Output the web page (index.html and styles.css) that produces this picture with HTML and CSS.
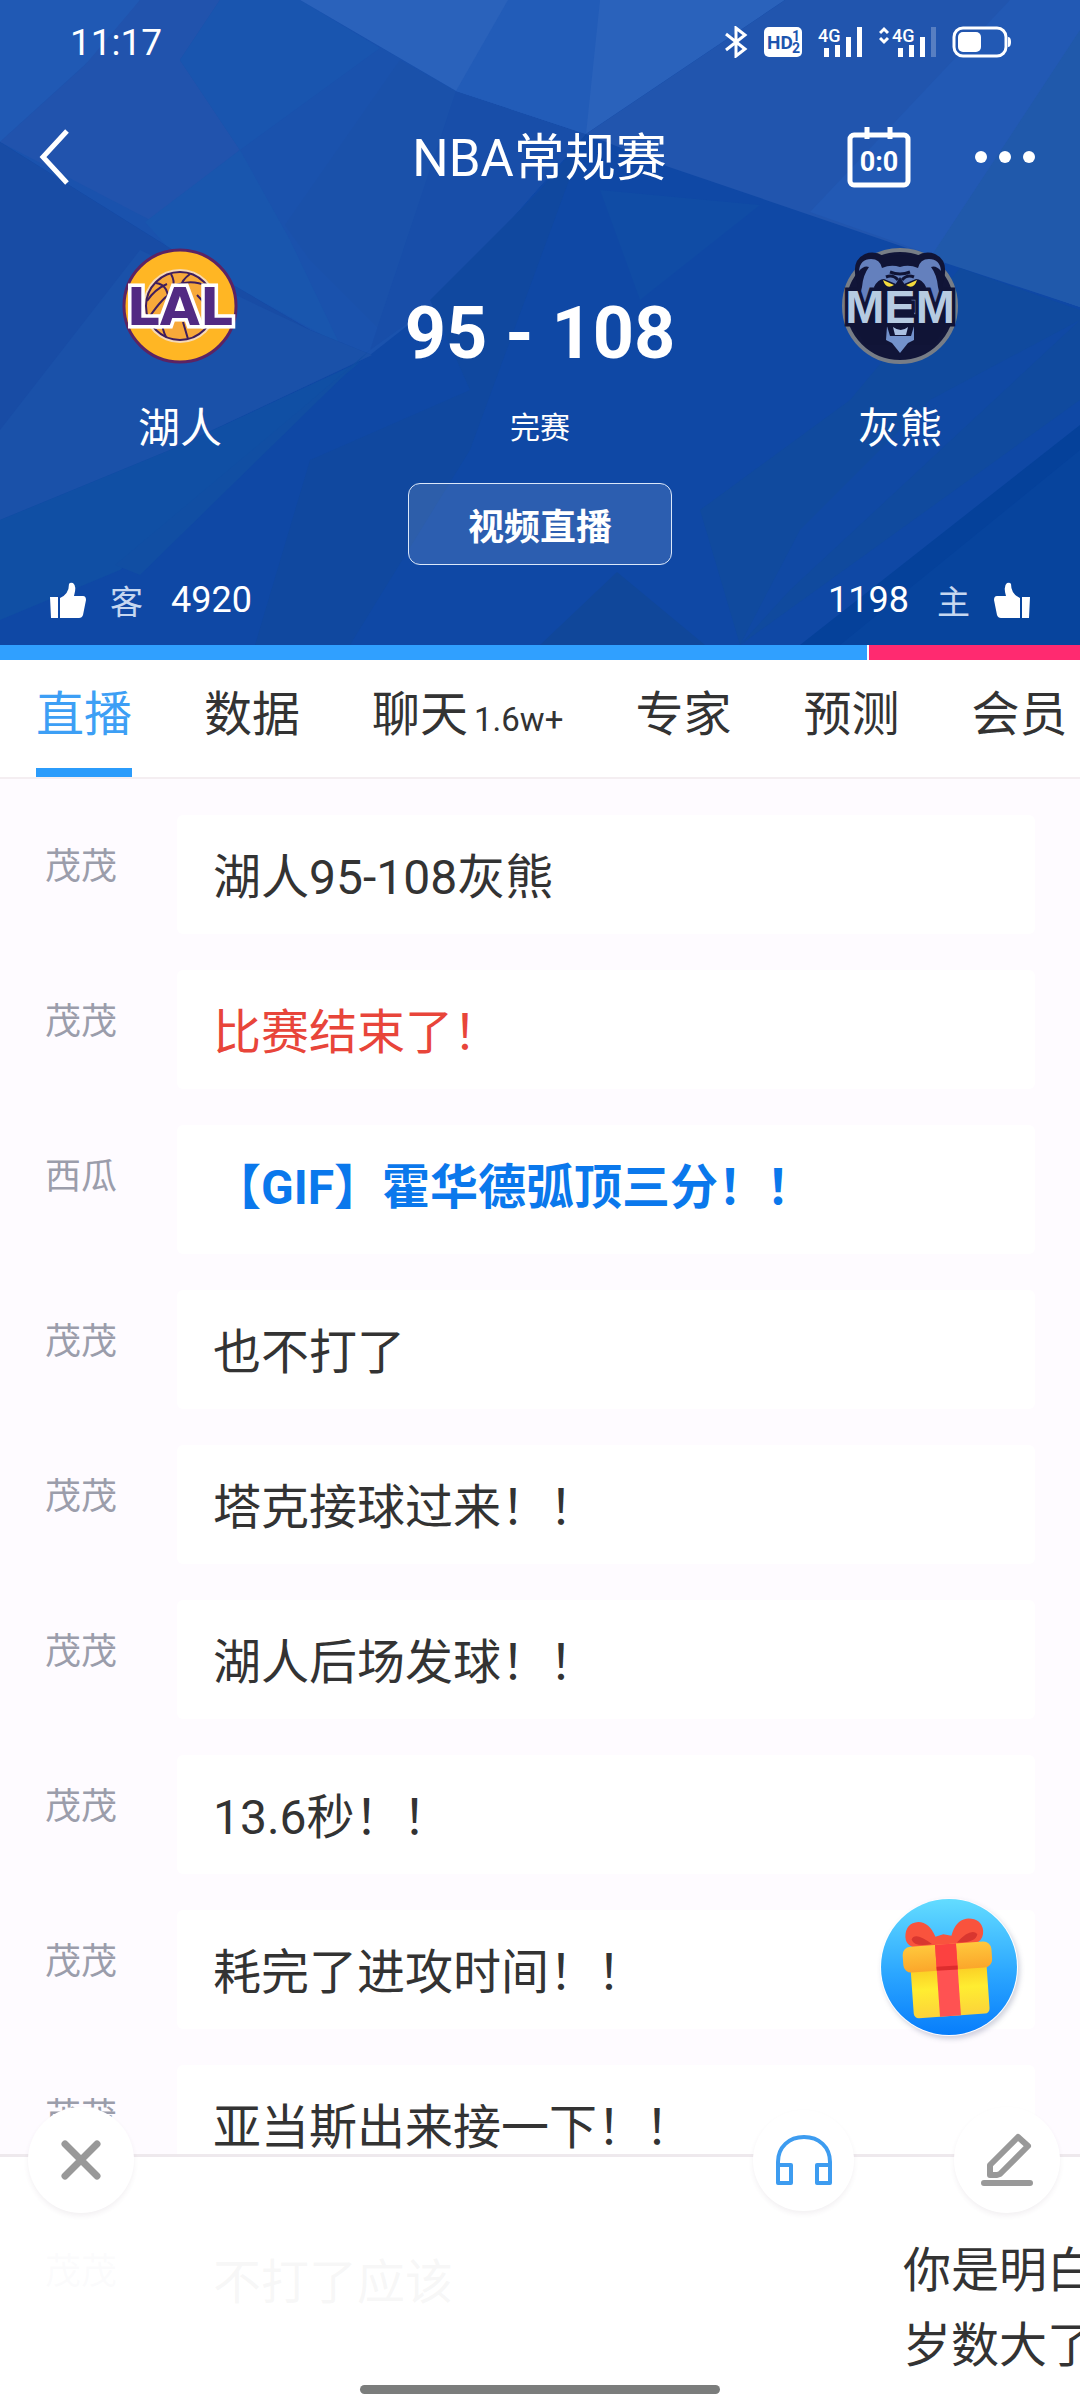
FILE: index.html
```html
<!DOCTYPE html>
<html lang="zh-CN">

<head>
    <meta charset="UTF-8">
    <meta name="viewport" content="width=device-width, initial-scale=1.0">
    <title>NBA常规赛</title>
    <link rel="stylesheet" href="styles.css">
</head>

<body>
    <header class="match">
        <!-- 背景色块 -->
        <svg class="match-bg" viewBox="0 0 1080 645" preserveAspectRatio="none" aria-hidden="true">
            <rect width="1080" height="645" fill="#0f48a5" />
            <polygon points="0,0 300,0 456,91 586,134 440,300 370,355 310,330 165,245 0,142" fill="#1a52ad" />
            <polygon points="0,0 140,0 110,42 0,142" fill="#2059b4" />
            <polygon points="140,0 220,0 180,60 240,150 150,220 0,142 85,65" fill="#2153ad" />
            <polygon points="220,0 300,0 380,48 240,150 180,60" fill="#1955af" />
            <polygon points="240,150 290,240 340,345 170,250 145,222" fill="#1956ae" />
            <polygon points="400,60 456,91 380,330 310,260 285,225" fill="#1a51aa" />
            <polygon points="0,142 165,245 310,330 372,355 170,450 0,520" fill="#184ca5" />
            <polygon points="140,250 310,330 372,355 170,450 0,520 0,430" fill="#1a51a9" />
            <polygon points="0,520 170,450 360,362 120,570 0,620" fill="#104fa4" />
            <polygon points="300,410 370,350 140,575 115,565" fill="#114ea3" />
            <polygon points="456,91 586,134 440,300 370,350" fill="#184ea9" />
            <polygon points="586,134 540,190 430,300 470,390 310,460 255,645 350,645 470,450" fill="#10489f" />
            <polygon points="600,190 760,205 640,300" fill="#104ca5" />
            <polygon points="300,0 456,91 586,134 785,0" fill="#2a62bb" />
            <polygon points="508,0 600,0 586,134 456,91" fill="#225cb8" />
            <polygon points="785,0 1080,0 1080,307 669,167 586,134" fill="#2155ae" />
            <polygon points="1010,0 1080,0 1080,307 810,212" fill="#2259b4" />
            <polygon points="1080,30 1080,307 930,258" fill="#2059ab" />
            <polygon points="1080,310 1080,400 740,645 700,510 850,400 960,268" fill="#104a9e" />
            <polygon points="1080,320 790,590 740,645 800,530 930,400" fill="#1049a4" />
            <polygon points="1080,425 800,645 1080,645" fill="#05419a" />
            <polygon points="1080,450 840,645 1080,645" fill="#07449d" />
            <polygon points="617,572 540,645 705,645" fill="#10479a" />
        </svg>

        <div class="status">
            <span class="time">11:17</span>
            <div class="status-icons">
                <svg width="24" height="32" viewBox="0 0 24 32" fill="none" stroke="#fff" stroke-width="3">
                    <path d="M2 8l19 15-9 7V2l9 7L2 24" />
                </svg>
                <svg width="40" height="32" viewBox="0 0 40 32">
                    <rect x="1" y="1" width="38" height="30" rx="5" fill="#fff" />
                    <text x="4" y="23" class="hd">HD</text>
                    <text x="29" y="15" class="hd-num">1</text>
                    <text x="29" y="27" class="hd-num">2</text>
                </svg>
                <svg width="46" height="32" viewBox="0 0 46 32" fill="#fff">
                    <text x="0" y="16" class="net">4G</text>
                    <path d="M6 22h5v9H6zM17 19h5v12h-5zM28 11h5v20h-5zM39 1h5v30h-5z" />
                </svg>
                <svg width="58" height="32" viewBox="0 0 58 32" fill="#fff">
                    <path d="M1 7l4-4 4 4M1 12l4 4 4-4" fill="none" stroke="#fff" stroke-width="3" />
                    <text x="13" y="16" class="net">4G</text>
                    <path d="M19 22h5v9h-5zM30 19h5v12h-5zM41 11h5v20h-5z" />
                    <path d="M52 1h5v30h-5z" opacity=".25" />
                </svg>
                <svg width="60" height="32" viewBox="0 0 60 32">
                    <rect x="2" y="2" width="52" height="28" rx="9" fill="none" stroke="#fff" stroke-width="3" />
                    <rect x="6" y="6" width="23" height="20" rx="5" fill="#fff" />
                    <path d="M56 11q3 0 3 5t-3 5z" fill="#fff" />
                </svg>
            </div>
        </div>

        <div class="nav">
            <button class="icon-btn back" aria-label="返回">
                <svg width="30" height="56" viewBox="0 0 30 56" fill="none" stroke="#fff" stroke-width="5">
                    <path d="M28 2L4 28l24 26" />
                </svg>
            </button>
            <h1>NBA常规赛</h1>
            <div class="nav-right">
                <button class="icon-btn" aria-label="比分">
                    <svg width="66" height="64" viewBox="0 0 66 64" fill="none" stroke="#fff" stroke-width="5">
                        <rect x="4" y="10" width="58" height="50" rx="4" />
                        <path d="M21 2v12M44 2v12" />
                        <text x="33" y="46" class="cal">0:0</text>
                    </svg>
                </button>
                <button class="icon-btn" aria-label="更多">
                    <svg width="62" height="14" viewBox="0 0 62 14" fill="#fff">
                        <circle cx="7" cy="7" r="6" />
                        <circle cx="31" cy="7" r="6" />
                        <circle cx="55" cy="7" r="6" />
                    </svg>
                </button>
            </div>
        </div>

        <div class="board">
            <div class="team">
                <svg width="120" height="120" viewBox="0 0 120 120">
                    <circle cx="60" cy="61" r="56" fill="#ffb624" stroke="#5c2363" stroke-width="3" />
                    <circle cx="60" cy="61" r="37" fill="#f6d9b4" />
                    <circle cx="60" cy="61" r="34" fill="#f7a93a" stroke="#3f1d5c" stroke-width="2" />
                    <path d="M51 29q4 7 2 14M70 29q-8 6-9 12M56 40q16-6 31 1M27 56q8-12 20-17M30 71q14-20 22-23M36 38q14 2 12 22M46 62q-8 14 0 30M63 77l5 17M77 50l13 14" fill="none" stroke="#3f1d5c" stroke-width="2" />
                    <text x="60" y="80" class="logo lal">LAL</text>
                </svg>
                <h2>湖人</h2>
            </div>
            <div class="score">
                <strong>95 - 108</strong>
                <p>完赛</p>
                <button class="live">视频直播</button>
            </div>
            <div class="team">
                <svg width="120" height="120" viewBox="0 0 120 120">
                    <circle cx="60" cy="61" r="56" fill="#111538" stroke="#777d86" stroke-width="4" />
                    <path d="M17 38Q10 16 25 9q10-4 20 3 15-4 30 0 10-7 20-3 15 7 8 29l-4 24H21z" fill="#101436" />
                    <!-- 熊脸 -->
                    <path d="M19 26q1-12 12-12 9 0 11 9 9-4 18-1 9-3 18 1 2-9 11-9 11 0 12 12-5-6-10-4 6 8 7 20l8 34H14l8-34q1-12 7-20-5-2-10 4z" fill="#6480bd" />
                    <path d="M50 27q10 4 20 0M46 32q7-3 12 3M74 32q-7-3-12 3" fill="none" stroke="#101436" stroke-width="3" />
                    <path d="M60 32l10 16 6 30H44l6-30z" fill="#101436" />
                    <path d="M34 42q4-8 10-8l12 5-2 9H36zM86 42q-4-8-10-8l-12 5 2 9h18z" fill="#101436" />
                    <path d="M43 35l11 5q-8 5-11-5zM77 35l-11 5q8 5 11-5z" fill="#f4dc3c" />
                    <path d="M12 78h96l-14 22H26z" fill="#101436" />
                    <path d="M47 81l3 10h21l3-10 0 14-6 3-8 10-8-10-6-3z" fill="#7392cc" />
                    <path d="M53 82q8 6 15 0l-2 8H55z" fill="#aac0e2" />
                    <text x="60" y="78" class="logo mem">MEM</text>
                </svg>
                <h2>灰熊</h2>
            </div>
        </div>

        <div class="votes">
            <button class="vote">
                <svg width="36" height="36" viewBox="0 0 36 36" fill="#fff">
                    <path d="M0 15h8v21H1zM10 16q9-4 9-14 1-2 4-1 4 3 1 13h9q3 0 3 4l-3 15q-1 3-4 3H10z" />
                </svg>
                <small>客</small>
                <span>4920</span>
            </button>
            <button class="vote">
                <span>1198</span>
                <small>主</small>
                <svg width="36" height="36" viewBox="0 0 36 36" fill="#fff">
                    <path d="M36 15h-8v21h7zM26 16q-9-4-9-14-1-2-4-1-4 3-1 13H3q-3 0-3 4l3 15q1 3 4 3h19z" />
                </svg>
            </button>
        </div>
    </header>

    <div class="ratio">
        <div class="away"></div>
        <div class="home"></div>
    </div>

    <nav class="tabs">
        <a href="#live" class="active">直播</a>
        <a href="#data">数据</a>
        <a href="#chat">聊天<small>1.6w+</small></a>
        <a href="#expert">专家</a>
        <a href="#predict">预测</a>
        <a href="#vip">会员</a>
    </nav>

    <main id="live">
        <ul>
            <li><span class="name">茂茂</span><p class="msg">湖人95-108灰熊</p></li>
            <li><span class="name">茂茂</span><p class="msg red">比赛结束了！</p></li>
            <li><span class="name">西瓜</span><p class="msg gif">【GIF】霍华德弧顶三分！！</p></li>
            <li><span class="name">茂茂</span><p class="msg">也不打了</p></li>
            <li><span class="name">茂茂</span><p class="msg">塔克接球过来！！</p></li>
            <li><span class="name">茂茂</span><p class="msg">湖人后场发球！！</p></li>
            <li><span class="name">茂茂</span><p class="msg">13.6秒！！</p></li>
            <li><span class="name">茂茂</span><p class="msg">耗完了进攻时间！！</p></li>
            <li><span class="name">茂茂</span><p class="msg">亚当斯出来接一下！！</p></li>
            <li><span class="name">茂茂</span><p class="msg">不打了应该</p></li>
        </ul>
    </main>

    <button class="icon-btn gift" aria-label="礼物">
        <svg width="138" height="138" viewBox="0 0 138 138">
            <defs>
                <linearGradient id="sky" x2="0" y2="1">
                    <stop offset="0" stop-color="#63dcff" />
                    <stop offset=".55" stop-color="#2ba6ff" />
                    <stop offset="1" stop-color="#077dfb" />
                </linearGradient>
                <linearGradient id="box" x2="0" y2="1">
                    <stop offset="0" stop-color="#f9c220" />
                    <stop offset=".5" stop-color="#ffed31" />
                    <stop offset="1" stop-color="#fcd33a" />
                </linearGradient>
                <linearGradient id="lid" x2="0" y2="1">
                    <stop offset="0" stop-color="#ffc83c" />
                    <stop offset="1" stop-color="#fba62b" />
                </linearGradient>
            </defs>
            <circle cx="69" cy="69" r="68" fill="url(#sky)" />
            <g transform="rotate(-4 69 75)">
                <path d="M57 47Q28 52 28 36q1-14 14-14 11 1 16 16l8-2 8 2q5-15 16-16 15 0 16 13 0 17-28 13z" fill="#f9533d" />
                <path d="M54 45q-18 2-20-6 4-8 20 6zM79 45q19 2 21-7-6-7-21 7z" fill="#d9362f" />
                <rect x="31" y="62" width="76" height="56" rx="5" fill="url(#box)" />
                <rect x="24" y="46" width="89" height="26" rx="8" fill="url(#lid)" />
                <path d="M57 46h21v72H57z" fill="#ff5252" />
                <path d="M57 46h21v25H57z" fill="#fc4140" />
                <path d="M57 68h21v4H57z" fill="#dd2c2d" />
            </g>
        </svg>
    </button>

    <!-- 底部悬浮区 -->
    <footer class="dock">
        <div class="actions">
            <button class="round" aria-label="关闭">
                <svg width="40" height="40" viewBox="0 0 40 40" fill="none" stroke="#999" stroke-width="7" stroke-linecap="round">
                    <path d="M4 4l32 32M36 4L4 36" />
                </svg>
            </button>
            <button class="round listen" aria-label="收听">
                <svg width="56" height="52" viewBox="0 0 56 52" fill="none" stroke="#3d9cf0" stroke-width="4" stroke-linejoin="round">
                    <path d="M2 32V28C2 13 13 3 28 3s26 10 26 25v4M2 31h13v18H2zM41 31h13v18H41z" />
                </svg>
            </button>
            <button class="round" aria-label="发言">
                <svg width="52" height="54" viewBox="0 0 52 54" fill="none" stroke="#999" stroke-width="6" stroke-linecap="round" stroke-linejoin="round">
                    <path d="M9 32L37 4l10 9-28 28-3 1H9zM3 50h46" />
                </svg>
            </button>
        </div>
        <p class="danmu">你是明白<br>岁数大了</p>
        <div class="home-bar"></div>
    </footer>
</body>

</html>
```
FILE: styles.css
```css
* {
    margin: 0;
    padding: 0;
    list-style: none;
    box-sizing: border-box;
}

body {
    height: 100vh;
    display: flex;
    flex-direction: column;
    position: relative;
    overflow: hidden;
    font-family: Roboto, "Noto Sans CJK SC", sans-serif;
    color: #333;
    background-color: #fefbff;
}

button {
    font-family: inherit;
    color: inherit;
    border: 0;
    background: none;
    cursor: pointer;
}

svg {
    display: block;
}

a {
    color: inherit;
    text-decoration: none;
}

/* 比赛头部 */
.match {
    position: relative;
    color: #fff;
}

.match-bg {
    position: absolute;
    top: 0;
    left: 0;
    z-index: -1;
    width: 100%;
    height: 100%;
}

.status {
    height: 84px;
    padding: 0 68px 0 70px;
    display: flex;
    justify-content: space-between;
    align-items: center;
}

.time {
    font-size: 37px;
}

.status-icons {
    display: flex;
    gap: 15px;
}

.hd {
    font-size: 19px;
    font-weight: bold;
    fill: #1d55ae;
}

.hd-num {
    font-size: 14px;
    font-weight: bold;
    fill: #1d55ae;
}

.net {
    font-size: 18px;
    font-weight: 500;
}

.nav {
    height: 146px;
    padding: 0 44px 0 39px;
    display: grid;
    grid-template-columns: 1fr auto 1fr;
    align-items: center;
}

.back {
    justify-self: start;
}

h1 {
    padding: 4px 0 0 4px;
    font-size: 51px;
    line-height: 72px;
    font-weight: 400;
}

.nav-right {
    justify-self: end;
    display: flex;
    align-items: center;
    gap: 62px;
}

.cal {
    font-size: 27px;
    font-weight: bold;
    fill: #fff;
    stroke: none;
    text-anchor: middle;
}

.board {
    padding-top: 15px;
    display: grid;
    grid-template-columns: 1fr 1fr 1fr;
    height: 335px;
}

.team {
    display: flex;
    flex-direction: column;
    align-items: center;
    gap: 34px;
}

.team h2 {
    font-size: 42px;
    line-height: 60px;
    font-weight: 400;
}

.logo {
    font-weight: bold;
    text-anchor: middle;
    paint-order: stroke;
}

.lal {
    font-family: "DejaVu Sans", sans-serif;
    font-size: 52px;
    font-kerning: none;
    fill: #522a83;
    stroke: #fff;
    stroke-width: 7px;
}

.mem {
    font-family: "Liberation Sans", sans-serif;
    font-size: 47px;
    fill: #b6cbe1;
    stroke: #101436;
    stroke-width: 7px;
}

.score {
    display: flex;
    flex-direction: column;
    align-items: center;
    padding-top: 47px;
}

.score strong {
    font-size: 72px;
    line-height: 84px;
}

.score p {
    margin-top: 30px;
    font-size: 30px;
    line-height: 44px;
}

.live {
    margin-top: 33px;
    width: 264px;
    height: 82px;
    border: 1px solid #dbe8fa;
    border-radius: 12px;
    background-color: rgba(255, 255, 255, .12);
    font-size: 36px;
    font-weight: 700;
}

.votes {
    height: 80px;
    padding: 0 50px 10px;
    display: flex;
    justify-content: space-between;
    align-items: center;
}

.vote {
    display: flex;
    align-items: center;
    gap: 24px;
    font-size: 36px;
}

.vote small {
    font-size: 33px;
    color: #c6d7f0;
}

.vote span {
    padding: 0 4px;
}

.ratio {
    display: flex;
    gap: 2px;
    height: 15px;
    flex-shrink: 0;
}

.away {
    flex: 4920;
    background-color: #30a0ff;
}

.home {
    flex: 1198;
    background-color: #ff2a70;
}

/* 标签栏 */
.tabs {
    display: flex;
    flex-shrink: 0;
    gap: 72px;
    height: 119px;
    padding: 0 36px;
    overflow: hidden;
    background-color: #fff;
    border-bottom: 2px solid #f4eef1;
    font-size: 48px;
    line-height: 110px;
    white-space: nowrap;
}

.tabs small {
    font-size: 33px;
    padding-left: 6px;
}

.tabs .active {
    color: #3d9ff5;
    border-bottom: 9px solid #2b9cfb;
}

/* 直播列表 */
main {
    flex: 1;
    min-height: 0;
    overflow: hidden;
    padding: 36px 45px;
}

li {
    display: grid;
    grid-template-columns: 132px 1fr;
    margin-bottom: 36px;
}

.name {
    padding-top: 26px;
    font-size: 36px;
    line-height: 52px;
    color: #9b9dab;
}

.msg {
    padding: 27px 36px 21px;
    font-size: 48px;
    line-height: 71px;
    background-color: #fff;
    border-radius: 6px;
}

.red {
    color: #e8453a;
}

.gif {
    padding-bottom: 31px;
    font-weight: 700;
    color: #0a78ec;
}

.gift {
    position: absolute;
    right: 62px;
    bottom: 364px;
    border-radius: 50%;
    box-shadow: 2px 3px 5px rgba(70, 80, 120, .25);
}

.dock {
    position: absolute;
    left: 0;
    right: 0;
    bottom: 0;
    height: 246px;
    border-top: 3px solid #eee9ed;
    background-color: rgba(255, 255, 255, .96);
}

.actions {
    display: flex;
    align-items: center;
    margin-top: -50px;
    padding: 0 20px 0 28px;
}

.round {
    width: 106px;
    height: 106px;
    display: flex;
    justify-content: center;
    align-items: center;
    border-radius: 50%;
    background-color: #fff;
    box-shadow: 0 3px 5px rgba(90, 60, 80, .07);
}

.listen {
    width: 101px;
    height: 101px;
    margin: 0 100px 0 auto;
}

.danmu {
    width: 177px;
    margin: 20px 0 0 auto;
    overflow: hidden;
    white-space: nowrap;
    font-size: 48px;
    line-height: 75px;
}

.home-bar {
    position: absolute;
    left: 50%;
    bottom: 6px;
    width: 360px;
    height: 9px;
    margin-left: -180px;
    border-radius: 5px;
    background-color: #7b7d7c;
}
```
